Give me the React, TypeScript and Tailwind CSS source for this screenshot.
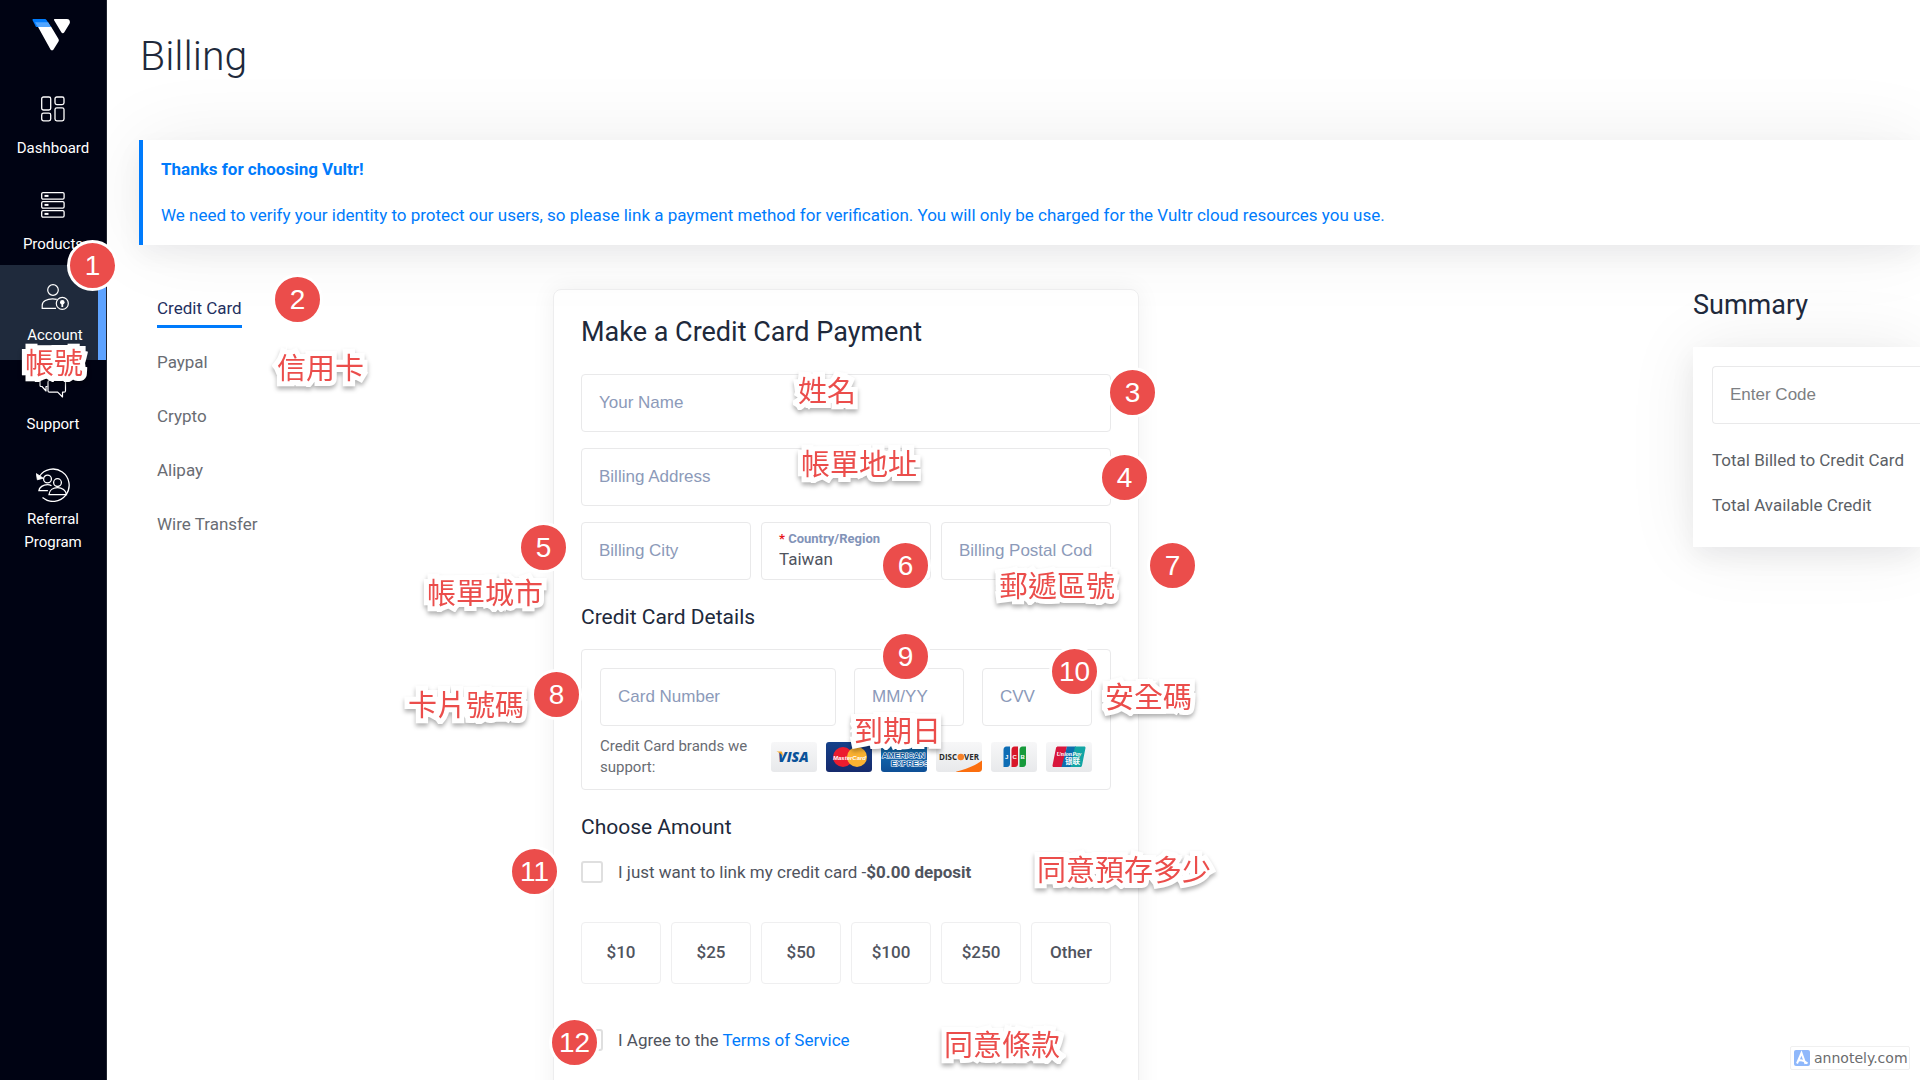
import React from "react";

const methods = ["Credit Card", "Paypal", "Crypto", "Alipay", "Wire Transfer"];

const amounts = ["$10", "$25", "$50", "$100", "$250", "Other"];

const badges = [
  { n: 1, pos: "left-[67px] top-[240px]" },
  { n: 2, pos: "left-[272px] top-[274px]" },
  { n: 3, pos: "left-[1107px] top-[367px]" },
  { n: 4, pos: "left-[1099px] top-[452px]" },
  { n: 5, pos: "left-[518px] top-[522px]" },
  { n: 6, pos: "left-[880px] top-[540px]" },
  { n: 7, pos: "left-[1147px] top-[540px]" },
  { n: 8, pos: "left-[531px] top-[669px]" },
  { n: 9, pos: "left-[880px] top-[631px]" },
  { n: 10, pos: "left-[1049px] top-[646px]" },
  { n: 11, pos: "left-[509px] top-[846px]" },
  { n: 12, pos: "left-[549px] top-[1017px]" },
];

const notes = [
  { text: "帳號", pos: "left-[25px] top-[340px]" },
  { text: "信用卡", pos: "left-[277px] top-[345px]" },
  { text: "姓名", pos: "left-[798px] top-[368px]" },
  { text: "帳單地址", pos: "left-[801px] top-[441px]" },
  { text: "帳單城市", pos: "left-[427px] top-[570px]" },
  { text: "郵遞區號", pos: "left-[999px] top-[563px]" },
  { text: "卡片號碼", pos: "left-[408px] top-[682px]" },
  { text: "到期日", pos: "left-[854px] top-[708px]" },
  { text: "安全碼", pos: "left-[1105px] top-[674px]" },
  { text: "同意預存多少", pos: "left-[1037px] top-[847px]" },
  { text: "同意條款", pos: "left-[944px] top-[1022px]" },
];

const Logo = () => (
  <svg viewBox="0 0 38 32" className="h-8 w-[38px]" aria-label="Vultr">
    <path d="M5.500 7h13.200l7.800 13c.5.8.5 1.600 0 2.400l-5 8c-.7 1.200-2.200 1.200-3 0z" fill="#fff" />
    <path d="M.7 1.600C.1.700.6 0 1.600 0H12.500c1 0 1.700.3 2.200 1.200L19 8H4z" fill="#007bfc" />
    <path d="M3 3.200h13.200L19 8H5.800z" fill="#51a5ff" />
    <path d="M23 0h12c1.500 0 2.500.8 2.800 2.200.2.800.2 1.700-.3 2.600l-5.200 8.500c-.8 1.200-2.200 1.200-3 0l-7.200-12c-.4-.7 0-1.300.9-1.300z" fill="#fff" />
  </svg>
);

const DashboardIcon = () => (
  <svg viewBox="0 0 26 26" className="h-[26px] w-[26px]" fill="none" stroke="#fff" strokeWidth="1.300">
    <rect x="1.700" y="1" width="9" height="13" rx="1.800" />
    <rect x="1.700" y="17.200" width="9" height="7.600" rx="1.800" />
    <rect x="15" y="1" width="9" height="7.600" rx="1.800" />
    <rect x="15" y="11.800" width="9" height="13" rx="1.800" />
  </svg>
);

const ProductsIcon = () => (
  <svg viewBox="0 0 26 26" className="h-[26px] w-[26px]" fill="none" stroke="#fff" strokeWidth="1.300">
    {[0.7, 9.7, 18.7].map((y) => (
      <g key={y}>
        <rect x="1.700" y={y} width="22.400" height="6.400" rx="1.300" />
        <path d={`M4.500 ${y + 3.2}h4`} strokeWidth="2" />
      </g>
    ))}
  </svg>
);

const AccountIcon = () => (
  <svg viewBox="0 0 30 26" className="h-[26px] w-[30px]" fill="none" stroke="#fff" strokeWidth="1.200">
    <circle cx="13" cy="6" r="5.300" />
    <path d="M16 24.300H2.200v-3c0-4.200 5-6.400 10.300-6.400 1.600 0 3 .2 4.300.5" />
    <circle cx="22.300" cy="19.400" r="6" />
    <circle cx="22.300" cy="18.200" r="2.300" fill="#fff" stroke="none" />
    <path d="M22.300 18v5" strokeWidth="1.800" />
  </svg>
);

const SupportIcon = () => (
  <svg viewBox="0 0 28 26" className="h-[26px] w-[28px]" fill="none" stroke="#fff" strokeWidth="1.200" strokeLinejoin="round">
    <path d="M8.500 14.500H7V19l-4-4.500H2c-.7 0-1-.5-1-1.500V3c0-1 .5-1.500 1.500-1.500h15c1 0 1.500.5 1.500 1.500v3" />
    <path d="M10.500 8.500H25c1 0 1.500.5 1.500 1.500v8.700c0 1-.5 1.500-1.500 1.500h-1.500V25l-4.800-4.800h-8.200c-1 0-1.500-.5-1.500-1.500V10c0-1 .5-1.500 1.500-1.500z" />
  </svg>
);

const ReferralIcon = () => (
  <svg viewBox="0 0 34 34" className="h-[34px] w-[34px]" fill="none" stroke="#fff" strokeWidth="1.300">
    <path d="M3.300 8.500A16.200 16.200 0 1 1 6.500 29.600" />
    <path d="M.3 5.600l1 6.200 6-1.600z" fill="#fff" strokeWidth=".8" />
    <circle cx="11.500" cy="11" r="3.900" />
    <circle cx="21.500" cy="14.600" r="3.900" />
    <path d="M15.500 17.800c-1.200-.8-2.500-1.200-4-1.200-4.500 0-8.200 2.800-8.600 6h9" />
    <path d="M13 26.600c.4-4.400 4-7 8.500-7s8.600 2.600 9 7z" />
  </svg>
);

const navItems = [
  { label: "Dashboard", icon: DashboardIcon, box: "gap-[15px] pt-[23px] pb-[9px]", active: false },
  { label: "Products", icon: ProductsIcon, box: "gap-[15px] pt-[23px] pb-[9px]", active: false },
  { label: "Account", icon: AccountIcon, box: "gap-[14px] pt-[19px] pb-[13px] pl-1 bg-[#1f2a3c]", active: true },
  { label: "Support", icon: SupportIcon, box: "gap-[15px] pt-3", active: false },
  { label: "Referral Program", icon: ReferralIcon, box: "gap-[6px] px-4 pt-[32px]", active: false },
];

const Sidebar = () => (
  <nav className="z-10 w-[107px] shrink-0 border-r border-[#20242f] bg-[#000313]">
    <a href="#home" className="flex h-[73px] justify-center pt-[19px] pr-1">
      <Logo />
    </a>
    {navItems.map(({ label, icon: Icon, box, active }) => (
      <a
        key={label}
        href={`#${label}`}
        className={`relative flex flex-col items-center text-center text-[15px] leading-[23px] text-white ${box}`}
      >
        <Icon />
        {label}
        {active && <span className="absolute inset-y-0 right-0 w-2 bg-[#5ea3ff]" />}
      </a>
    ))}
  </nav>
);

const TextField = ({ label, className = "" }: { label: string; className?: string }) => (
  <input
    type="text"
    aria-label={label}
    placeholder={label}
    className={`h-[58px] w-full min-w-0 rounded-[4px] border border-[#e9e9ea] bg-white px-[17px] font-['Liberation_Sans',sans-serif] text-[17px] text-[#50545e] outline-none placeholder:text-[#8c9ab9] ${className}`}
  />
);

const cardFrame = "h-[30px] w-[46px] rounded-[3px]";

const CardBrands = () => (
  <div className="flex shrink-0 gap-[9px]">
    <svg viewBox="0 0 46 30" className={`${cardFrame} bg-linear-to-b from-[#f7f7f8] to-[#e8e9eb]`}>
      <text x="7" y="20" fontSize="14" fontWeight="800" fontStyle="italic" fontFamily="Open Sans, sans-serif" fill="#0a5299">
        VISA
      </text>
      <path d="M5.500 9.500h4.200c1 0 1.400.4 1.600 1.300l.8 4c-1.200-2.600-3.400-4.300-6.600-5.300z" fill="#f8a51b" />
    </svg>
    <svg viewBox="0 0 46 30" className={`${cardFrame} bg-linear-to-b from-[#15418a] to-[#152a6c]`}>
      <circle cx="17" cy="15" r="10" fill="#ec1c2e" />
      <circle cx="31" cy="15" r="10" fill="#fbb231" />
      <text x="23.500" y="17.500" textAnchor="middle" fontSize="6" fontWeight="700" fontStyle="italic" fontFamily="Liberation Sans, sans-serif" fill="#fff">
        MasterCard
      </text>
    </svg>
    <svg viewBox="0 0 46 30" className={`${cardFrame} bg-linear-to-b from-[#1478be] to-[#0e4f96]`}>
      <g fontSize="8" fontWeight="700" fontFamily="Liberation Sans, sans-serif" fill="#0d5ea6" stroke="#fff" strokeWidth="1.200" paintOrder="stroke">
        <text x="1" y="15.500">AMERICAN</text>
        <text x="10" y="23.500">EXPRESS</text>
      </g>
    </svg>
    <svg viewBox="0 0 46 30" className={`${cardFrame} bg-linear-to-b from-[#f7f7f8] to-[#e8e9eb]`}>
      <path d="M20.500 29.500C30 27.500 40 23 46 18.500V27c0 2-1 3-3 3H20z" fill="#fb6e0e" />
      <circle cx="24.800" cy="15" r="3.300" fill="#f5812a" />
      <g fontSize="8" fontWeight="700" fontFamily="Open Sans, sans-serif" fill="#2b2b2b">
        <text x="3" y="18">DISC</text>
        <text x="28" y="18">VER</text>
      </g>
    </svg>
    <svg viewBox="0 0 46 30" className={`${cardFrame} bg-linear-to-b from-[#f7f7f8] to-[#e8e9eb]`}>
      <path d="M15.500 4.500H19v17c0 2-1 3.500-3 3.500h-3.500V8c0-2 1-3.500 3-3.500z" fill="#0e6db5" />
      <path d="M23.500 4.500H27v17c0 2-1 3.500-3 3.500h-3.500V8c0-2 1-3.500 3-3.500z" fill="#d8172a" />
      <path d="M31.500 4.500H35v17c0 2-1 3.500-3 3.500h-3.500V8c0-2 1-3.500 3-3.500z" fill="#179a3c" />
      <g fontSize="6" fontWeight="700" fontFamily="Liberation Sans, sans-serif" fill="#fff">
        <text x="14" y="17">J</text>
        <text x="21.600" y="17">C</text>
        <text x="29.600" y="17">B</text>
      </g>
    </svg>
    <svg viewBox="0 0 46 30" className={`${cardFrame} bg-linear-to-b from-[#f7f7f8] to-[#e8e9eb]`}>
      <path d="M12 4.500h9L16.500 25H8c-1.200 0-1.700-.7-1.400-2L10 6c.3-1 1-1.500 2-1.500z" fill="#d8163c" />
      <path d="M21 4.500h9L25.500 25h-10z" fill="#0d6fae" />
      <path d="M29 4.500h9c1.200 0 1.700.7 1.400 2L36 23.500c-.3 1-1 1.500-2 1.500H24.500z" fill="#12a5a4" />
      <text x="10.500" y="14" fontSize="6" fontWeight="700" fontStyle="italic" fontFamily="Liberation Serif, serif" fill="#fff">
        UnionPay
      </text>
      <text x="19" y="21.500" fontSize="7.500" fontWeight="700" fontFamily="Noto Sans CJK SC, sans-serif" fill="#fff">
        银联
      </text>
    </svg>
  </div>
);

const checkboxClass = "size-[22px] shrink-0 appearance-none rounded-[3px] border-2 border-[#dfdfdf] bg-white";

const PaymentForm = () => (
  <form className="mt-1 h-[830px] rounded-[8px] border border-[#ededee] px-[27px] pt-[22px] shadow-[0_0_24px_rgba(0,0,0,0.06)]">
    <h2 className="mb-[22px] text-[27px] leading-[40px] text-[#20293b]">Make a Credit Card Payment</h2>
    <div className="flex flex-col gap-4">
      <TextField label="Your Name" />
      <TextField label="Billing Address" />
      <div className="grid grid-cols-3 gap-[10px]">
        <TextField label="Billing City" />
        <div className="flex h-[58px] flex-col rounded-[4px] border border-[#e9e9ea] bg-white px-[17px] pt-[7px]">
          <label htmlFor="country" className="text-[13px] leading-[17px] font-bold whitespace-nowrap text-[#8293b8]">
            <span className="text-[#e8151b]">*</span> Country/Region
          </label>
          <select id="country" className="appearance-none bg-transparent text-[17px] leading-[24px] text-[#50545e] outline-none">
            <option>Taiwan</option>
          </select>
        </div>
        <TextField label="Billing Postal Code" />
      </div>
    </div>

    <h3 className="mt-[22px] mb-[17px] text-[21px] leading-[30px] text-[#20293b]">Credit Card Details</h3>
    <div className="rounded-[4px] border border-[#e9e9ea] p-[18px] pb-[11px]">
      <div className="flex gap-[18px]">
        <TextField label="Card Number" className="flex-1" />
        <TextField label="MM/YY" className="max-w-[110px]" />
        <TextField label="CVV" className="max-w-[110px]" />
      </div>
      <div className="mt-[10px] flex items-center justify-between">
        <p className="w-[160px] text-[15px] leading-[21px] text-[#696c73]">Credit Card brands we support:</p>
        <CardBrands />
      </div>
    </div>

    <h3 className="mt-[22px] mb-[16px] text-[21px] leading-[30px] text-[#20293b]">Choose Amount</h3>
    <label className="flex items-center gap-[15px] text-[17px] leading-[28px] text-[#50545e]">
      <input type="checkbox" className={checkboxClass} />
      <span>
        I just want to link my credit card -<b>$0.00 deposit</b>
      </span>
    </label>
    <div className="mt-[36px] grid grid-cols-6 gap-[10px]">
      {amounts.map((amount) => (
        <button
          key={amount}
          type="button"
          className="h-[62px] rounded-[4px] border border-[#efeff0] text-[17px] font-medium text-[#50545e]"
        >
          {amount}
        </button>
      ))}
    </div>
    <div className="mt-[42px] flex items-center gap-[15px] text-[17px] leading-[28px] text-[#50545e]">
      <input id="agree" type="checkbox" className={checkboxClass} />
      <label htmlFor="agree">
        I Agree to the{" "}
        <a href="#terms" className="text-[#007bfc]">
          Terms of Service
        </a>
      </label>
    </div>
  </form>
);

const Summary = () => (
  <aside>
    <h2 className="text-[27px] leading-[40px] text-[#20293b]">Summary</h2>
    <div className="mt-[22px] bg-white pt-[19px] pb-[19px] pl-[19px] shadow-[0_10px_24px_rgba(0,10,30,0.06),0_0_70px_rgba(0,10,30,0.08)]">
      <input
        type="text"
        aria-label="Enter Code"
        placeholder="Enter Code"
        className="h-[58px] w-full rounded-l-[4px] border border-r-0 border-[#e9e9ea] px-[17px] font-['Liberation_Sans',sans-serif] text-[17px] outline-none placeholder:text-[#7d7f83]"
      />
      <p className="mt-[14px] text-[17px] leading-[45px] whitespace-nowrap text-[#5c5f66]">Total Billed to Credit Card</p>
      <p className="text-[17px] leading-[45px] whitespace-nowrap text-[#5c5f66]">Total Available Credit</p>
    </div>
  </aside>
);

const Annotations = () => (
  <div className="pointer-events-none absolute inset-0 z-20">
    {badges.map(({ n, pos }) => (
      <span
        key={n}
        className={`absolute flex size-[51px] items-center justify-center rounded-full border-3 border-white bg-[#eb4d4b] font-['Liberation_Sans',sans-serif] text-[28px] leading-none text-white ${pos}`}
      >
        {n}
      </span>
    ))}
    {notes.map(({ text, pos }) => (
      <span
        key={text}
        className={`absolute text-[29px] leading-[42px] whitespace-nowrap text-[#eb4d4b] font-['Noto_Sans_CJK_TC',sans-serif] [-webkit-text-stroke:10px_white] [paint-order:stroke_fill] [stroke-linejoin:round] drop-shadow-[0_3px_2px_rgba(0,0,0,0.3)] ${pos}`}
      >
        {text}
      </span>
    ))}
  </div>
);

const Watermark = () => (
  <div className="absolute top-[1046px] right-[10px] z-20 flex h-6 w-[120px] items-center gap-1 rounded-[2px] border border-[#f0f0f0] bg-white pl-[3px] font-['DejaVu_Sans',sans-serif] text-[14px] text-[#6b6c6e]">
    <svg viewBox="0 0 16 16" className="size-4 shrink-0">
      <rect width="16" height="16" rx="2" fill="#8fb8fb" />
      <path d="M3 13.500L7.500 3l4 11M5 10.500c3-1 5.500 0 8.500 3" fill="none" stroke="#fff" strokeWidth="2" />
    </svg>
    annotely.com
  </div>
);

export const App = () => {
  return (
    <div className="relative flex h-screen min-h-[1080px] overflow-hidden bg-white font-[Roboto,sans-serif]">
      <Sidebar />
      <main className="min-w-0 flex-1 pl-8">
        <h1 className="pt-[26px] pl-[1px] text-[41px] leading-[60px] font-light text-[#20293b]">Billing</h1>

        {/* Verification notice */}
        <section className="mt-[54px] border-l-4 border-[#007bfc] bg-white pt-[6px] pb-[7px] pl-[18px] text-[17px] leading-[46px] text-[#007bfc] shadow-[0_10px_24px_rgba(0,10,30,0.05),0_0_80px_rgba(0,10,30,0.07)]">
          <p className="font-bold">Thanks for choosing Vultr!</p>
          <p>
            We need to verify your identity to protect our users, so please link a payment method for verification. You
            will only be charged for the Vultr cloud resources you use.
          </p>
        </section>

        <div className="mt-10 grid grid-cols-[414fr_586fr_554fr_227fr]">
          <ul className="flex flex-col items-start gap-[27px] pt-[10px] pl-[18px] text-[17px] leading-[27px] text-[#696c73]">
            {methods.map((method, i) => (
              <li key={method}>
                <a
                  href={`#${method}`}
                  className={i === 0 ? "-mb-[6px] block border-b-3 border-[#007bfc] pb-[3px] text-[#1f3060]" : "block"}
                >
                  {method}
                </a>
              </li>
            ))}
          </ul>
          <PaymentForm />
          <div />
          <Summary />
        </div>
      </main>
      <Annotations />
      <Watermark />
    </div>
  );
};

export default App;
